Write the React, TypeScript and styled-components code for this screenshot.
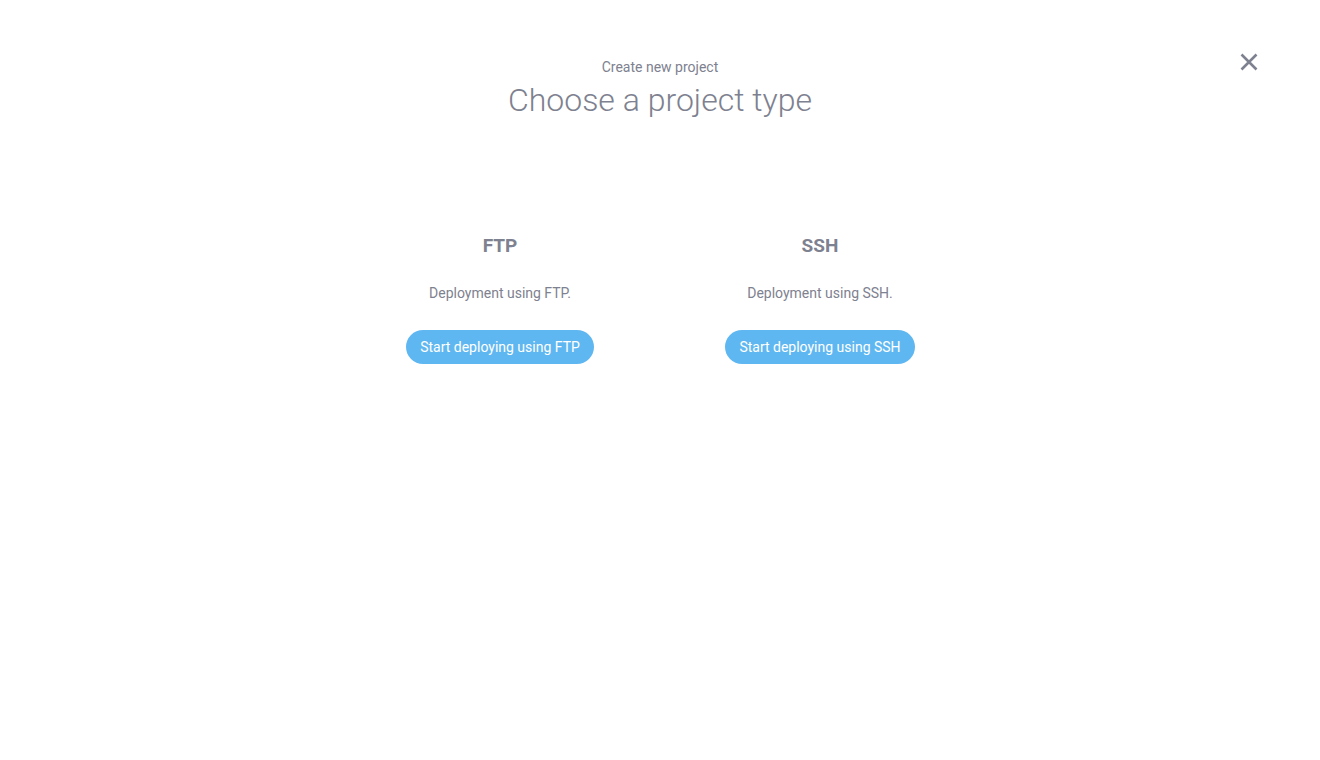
import React from "react";
import styled, { createGlobalStyle } from "styled-components";

const GlobalStyle = createGlobalStyle`
  html, body { margin: 0; padding: 0; background: #ffffff; }
  body { font-family: Roboto, "Liberation Sans", sans-serif; color: #7e818f; }
`;

const Page = styled.div`
  position: relative;
  width: 1320px;
  height: 760px;
  background: #fff;
  display: flex;
  flex-direction: column;
  align-items: center;
`;

const Header = styled.header`
  display: flex;
  flex-direction: column;
  align-items: center;
  padding-top: 58px;
`;

const Subtitle = styled.div`
  font-size: 14px;
  line-height: 18px;
  color: #7e818f;
  font-weight: 400;
`;

const Title = styled.h1`
  margin: 4px 0 0;
  font-size: 32px;
  line-height: 40px;
  font-weight: 300;
  color: #7e818f;
`;

const CloseButton = styled.button`
  position: absolute;
  top: 51px;
  right: 60px;
  width: 22px;
  height: 22px;
  padding: 0;
  border: none;
  background: transparent;
  cursor: pointer;
  display: flex;
  align-items: center;
  justify-content: center;
`;

const Options = styled.div`
  display: grid;
  grid-template-columns: 320px 320px;
  margin-top: 114px;
`;

const Option = styled.section`
  display: flex;
  flex-direction: column;
  align-items: center;
`;

const OptionTitle = styled.h2`
  margin: 0;
  font-size: 19px;
  line-height: 24px;
  font-weight: 700;
  color: #7e818f;
`;

const OptionText = styled.p`
  margin: 25px 0 0;
  font-size: 14px;
  line-height: 20px;
  color: #7e818f;
`;

const StartButton = styled.button`
  margin-top: 27px;
  height: 34px;
  padding: 0 14px;
  border: none;
  border-radius: 17px;
  background: #5fb7f1;
  color: #ffffff;
  font-family: Roboto, "Liberation Sans", sans-serif;
  font-size: 14px;
  cursor: pointer;
`;

const options = [
  { name: "FTP", text: "Deployment using FTP.", cta: "Start deploying using FTP" },
  { name: "SSH", text: "Deployment using SSH.", cta: "Start deploying using SSH" },
];

export default function App() {
  return (
    <>
      <GlobalStyle />
      <Page>
        <Header>
          <Subtitle>Create new project</Subtitle>
          <Title>Choose a project type</Title>
        </Header>
        <CloseButton aria-label="Close">
          <svg width="18" height="18" viewBox="0 0 18 18">
            <path d="M1.5 1.5 L16.5 16.5 M16.5 1.5 L1.5 16.5" stroke="#7e818f" strokeWidth="2.6" strokeLinecap="butt" />
          </svg>
        </CloseButton>
        <Options>
          {options.map((o) => (
            <Option key={o.name}>
              <OptionTitle>{o.name}</OptionTitle>
              <OptionText>{o.text}</OptionText>
              <StartButton>{o.cta}</StartButton>
            </Option>
          ))}
        </Options>
      </Page>
    </>
  );
}
